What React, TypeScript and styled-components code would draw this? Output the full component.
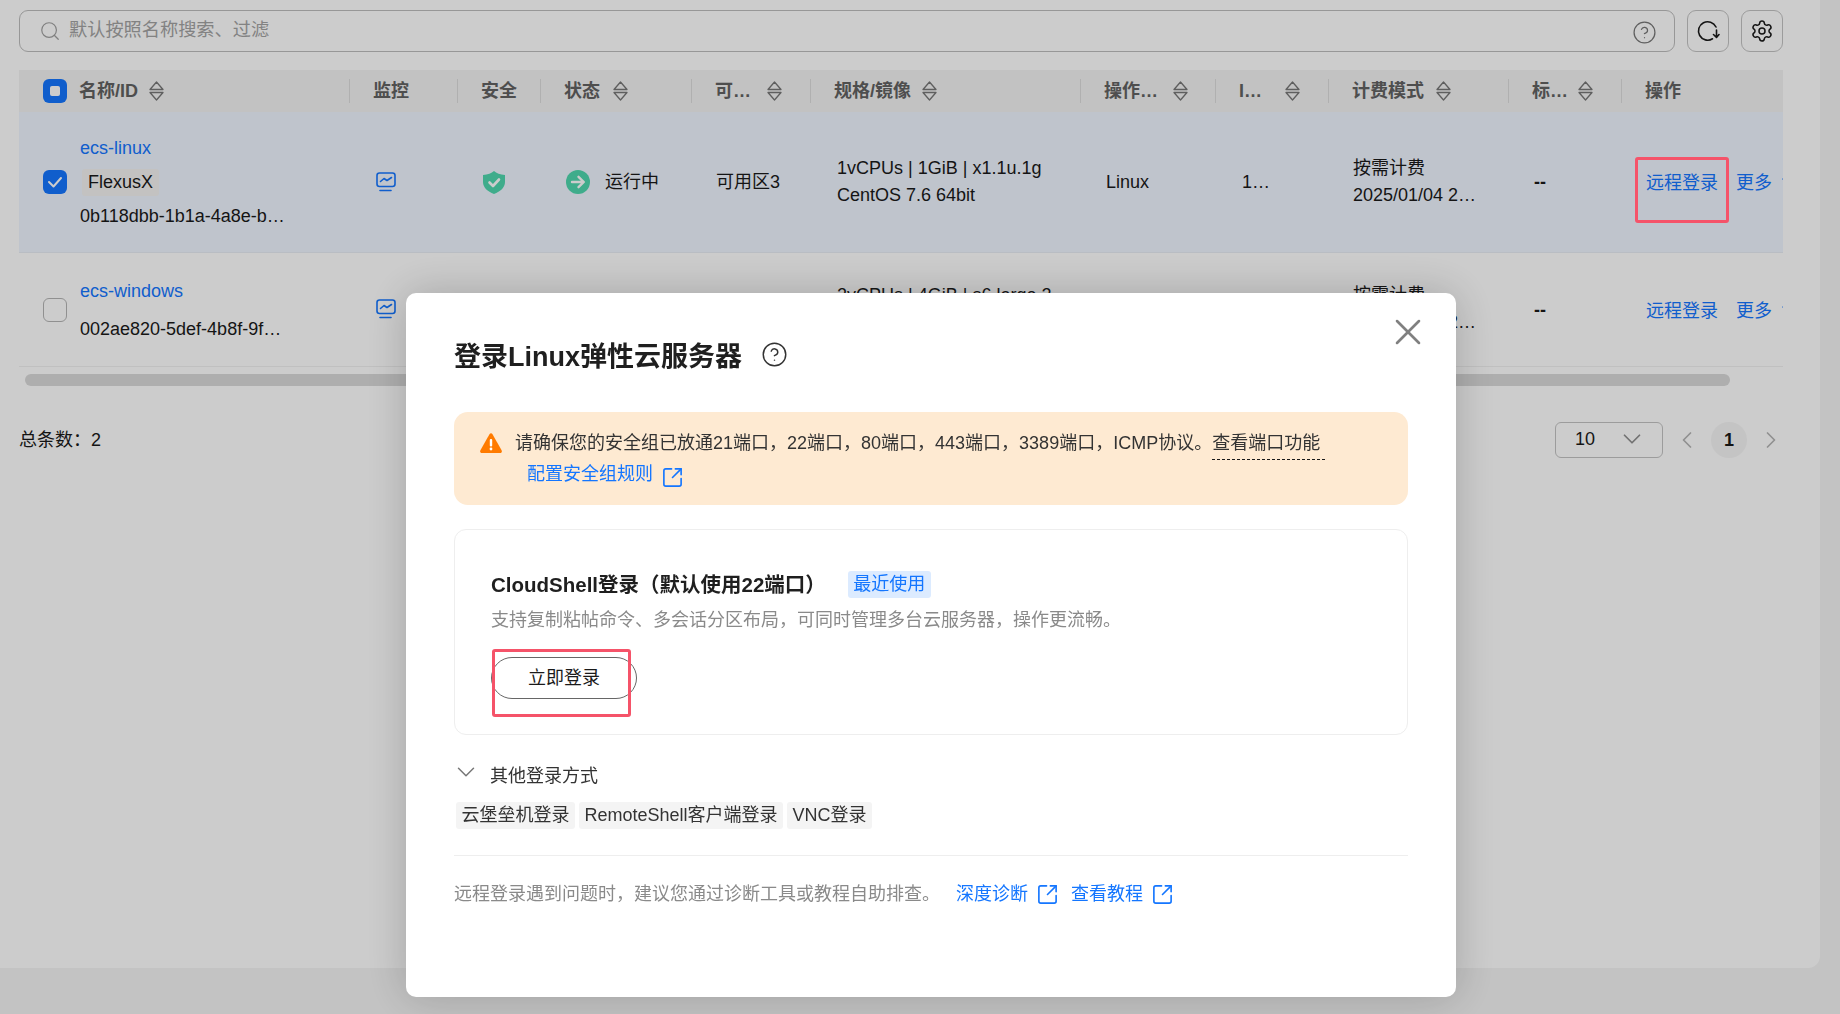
import React, { FunctionComponent } from 'react';
import styled, { createGlobalStyle } from 'styled-components';
import { ChevronDown, ChevronLeft, ChevronRight, CircleHelp, Search, Settings, SquareArrowOutUpRight, X } from 'lucide-react';

const PRIMARY = '#1476ff';
const COLUMNS = '330px 108px 83px 151px 119px 270px 135px 113px 180px 113px 162px';

const GlobalStyle = createGlobalStyle`
  html, body {
    margin: 0;
    padding: 0;
    height: 100%;
    overflow: hidden;
    background: #f4f4f4;
    font-family: "Liberation Sans", "Noto Sans CJK SC", sans-serif;
    font-size: 18px;
    color: #1a1a1a;
  }
  * {
    box-sizing: border-box;
  }
`;

const Panel = styled.main`
  width: 1820px;
  height: 968px;
  padding: 10px 37px 0 19px;
  background: #fff;
  border-radius: 0 0 12px 0;
`;

const Toolbar = styled.div`
  display: flex;
  gap: 12px;
  height: 42px;
`;

const SearchBox = styled.div`
  flex: 1;
  display: flex;
  align-items: center;
  padding: 0 17px 0 19px;
  border: 1px solid #bdbdbd;
  border-radius: 9px;
  color: #a3a3a3;
`;

const Placeholder = styled.span`
  flex: 1;
  margin-left: 8px;
  margin-top: -6px;
  font-size: 18.2px;
`;

const SearchHelp = styled(CircleHelp)`
  margin-top: 2px;
`;

const IconButton = styled.button`
  width: 42px;
  height: 42px;
  padding: 0;
  display: flex;
  align-items: center;
  justify-content: center;
  background: transparent;
  border: 1px solid #c4c4c4;
  border-radius: 9px;
  color: #1a1a1a;
`;

const HeaderRow = styled.div`
  display: grid;
  grid-template-columns: ${COLUMNS};
  align-items: center;
  height: 42px;
  margin-top: 18px;
  background: #f3f3f3;
`;

const HeadCell = styled.div<{ $first?: boolean }>`
  display: flex;
  align-items: center;
  height: 24px;
  padding-left: ${({ $first }) => ($first ? '24px' : '23px')};
  border-left: ${({ $first }) => ($first ? 'none' : '1px solid #dcdcdc')};
  font-weight: bold;
  line-height: 22px;
  color: #626262;
  white-space: nowrap;
`;

const SortIcon = styled.svg<{ $gap: number }>`
  flex: none;
  margin-left: ${({ $gap }) => $gap}px;
`;

const Check = styled.span<{ $on?: boolean }>`
  flex: none;
  width: 24px;
  height: 24px;
  display: flex;
  align-items: center;
  justify-content: center;
  border-radius: 6px;
  background: ${({ $on }) => ($on ? PRIMARY : '#fff')};
  border: ${({ $on }) => ($on ? 'none' : '1px solid #b5b5b5')};
`;

const CheckDot = styled.span`
  width: 10px;
  height: 10px;
  border-radius: 2px;
  background: #fff;
`;

const HeadName = styled.span`
  margin-left: 12px;
`;

const Row = styled.div<{ $selected?: boolean; $height: number }>`
  display: grid;
  grid-template-columns: ${COLUMNS};
  align-items: center;
  height: ${({ $height }) => $height}px;
  overflow: hidden;
  background: ${({ $selected }) => ($selected ? '#eff5ff' : '#fff')};
  border-bottom: 1px solid ${({ $selected }) => ($selected ? '#e8edf4' : '#f0f0f0')};
`;

const Cell = styled.div<{ $pad?: number }>`
  display: flex;
  flex-direction: column;
  gap: 5px;
  padding-left: ${({ $pad }) => $pad ?? 26}px;
  line-height: 22px;
  white-space: nowrap;
`;

const TwoLineCell = styled(Cell)`
  margin-top: -2px;
`;

const MonitorCell = styled(Cell)`
  margin-top: -1px;
`;

const NameCell = styled.div`
  display: flex;
  align-items: center;
  padding-left: 24px;
`;

const NameStack = styled.div<{ $gap: number }>`
  display: flex;
  flex-direction: column;
  align-items: flex-start;
  gap: ${({ $gap }) => $gap}px;
  margin-left: 13px;
  line-height: 26px;
`;

const Link = styled.a`
  color: ${PRIMARY};
  text-decoration: none;
`;

const Tag = styled.span`
  height: 27px;
  margin-left: 2px;
  padding: 0 6px;
  line-height: 27px;
  background: #f4f3f2;
  border-radius: 3px;
`;

const Status = styled.div`
  display: flex;
  align-items: center;
  gap: 15px;
  padding-left: 26px;
  line-height: 22px;
`;

const StatusText = styled.span`
  margin-top: -1px;
`;

const Dash = styled.span`
  margin-left: 1px;
  font-weight: bold;
`;

const OpsCell = styled.div`
  display: flex;
  align-items: center;
  margin-top: -2px;
  padding-left: 25px;
  white-space: nowrap;
`;

const Marked = styled.span`
  position: relative;
`;

/* red frames are drawn over the mask, they keep full colour in the picture */
const RedFrame = styled.span<{ $top: number; $right: number; $bottom: number; $left: number }>`
  position: absolute;
  z-index: 20;
  top: ${({ $top }) => $top}px;
  right: ${({ $right }) => $right}px;
  bottom: ${({ $bottom }) => $bottom}px;
  left: ${({ $left }) => $left}px;
  border: 3px solid #f55369;
  border-radius: 3px;
  pointer-events: none;
`;

const MoreLink = styled(Link)`
  display: flex;
  align-items: center;
  margin-left: 18px;
`;

const MoreChevron = styled(ChevronDown)`
  flex: none;
  margin-left: 7px;
`;

const ScrollBar = styled.div`
  height: 12px;
  margin: 7px 53px 0 6px;
  background: #dadada;
  border-radius: 6px;
`;

const Pager = styled.div`
  display: flex;
  align-items: center;
  gap: 6px;
  height: 36px;
  margin: 36px -6px 0 0;
`;

const Total = styled.span`
  flex: 1;
  padding-bottom: 4px;
`;

const PageSize = styled.div`
  width: 108px;
  height: 36px;
  display: flex;
  align-items: center;
  justify-content: space-between;
  padding: 0 15px 2px 19px;
  border: 1px solid #c4c4c4;
  border-radius: 6px;
`;

const PageNav = styled.span`
  width: 36px;
  height: 36px;
  display: flex;
  align-items: center;
  justify-content: center;
  color: #b5b5b5;
`;

const PageCurrent = styled(PageNav)`
  border-radius: 50%;
  background: #f6f6f6;
  font-weight: bold;
  color: #1a1a1a;
`;

const Mask = styled.div`
  position: fixed;
  inset: 0;
  z-index: 10;
  padding: 293px 0 0 406px;
  background: rgba(0, 0, 0, 0.2);
`;

const Modal = styled.section`
  position: relative;
  width: 1050px;
  height: 704px;
  padding: 44px 48px 0;
  background: #fff;
  border-radius: 10px;
  box-shadow: 0 0 44px rgba(0, 0, 0, 0.2);
`;

const CloseButton = styled.span`
  position: absolute;
  top: 17px;
  right: 26px;
  width: 44px;
  height: 44px;
  color: #808080;
`;

const TitleRow = styled.h2`
  display: flex;
  align-items: center;
  gap: 19px;
  height: 34px;
  margin: 0;
  font-size: 27px;
  font-weight: bold;
  color: #1f1f1f;
`;

const Alert = styled.div`
  display: flex;
  gap: 13px;
  height: 93px;
  margin-top: 41px;
  padding: 16px 0 0 26px;
  background: #feead2;
  border-radius: 14px;
  line-height: 31px;
  color: #333;
`;

const WarnIcon = styled.svg`
  flex: none;
  margin-top: 5px;
`;

const Dashed = styled.span`
  display: inline-block;
  height: 32px;
  padding-right: 5px;
  border-bottom: 1px dashed #1a1a1a;
`;

const IconLink = styled(Link)`
  display: flex;
  align-items: center;
  gap: 8px;
  margin-bottom: 5px;
`;

const ExternalMark = styled(SquareArrowOutUpRight)`
  flex: none;
  margin-top: 5px;
`;

const AlertLink = styled(IconLink)`
  margin-left: 12px;
  margin-top: -1px;
`;

const Card = styled.div`
  height: 206px;
  margin-top: 24px;
  padding: 41px 36px 0;
  border: 1px solid #eeeeee;
  border-radius: 12px;
`;

const CardHead = styled.div`
  display: flex;
  align-items: center;
  height: 27px;
`;

const CardTitle = styled.strong`
  margin-top: -4px;
  font-size: 20.5px;
  color: #1f1f1f;
`;

const RecentTag = styled.span`
  height: 27px;
  margin-left: 22px;
  padding: 0 5.5px;
  line-height: 27px;
  background: #dcebff;
  border-radius: 3px;
  color: ${PRIMARY};
`;

const Muted = styled.div`
  color: #8a8a8a;
  line-height: 26px;
`;

const CardDesc = styled(Muted)`
  margin-top: 9px;
`;

const LoginButton = styled.button`
  position: relative;
  display: block;
  width: 146px;
  height: 42px;
  margin-top: 24px;
  padding: 0 0 5px;
  background: #fff;
  border: 1px solid #666;
  border-radius: 21px;
  font: inherit;
  color: #1a1a1a;
`;

const OtherHead = styled.div`
  display: flex;
  align-items: center;
  gap: 9.5px;
  height: 26px;
  margin-top: 26px;
  color: #333;
`;

const OtherChevron = styled(ChevronDown)`
  flex: none;
  margin-top: -4px;
  margin-left: -3.5px;
`;

const MethodRow = styled.div`
  display: flex;
  gap: 4px;
  margin-top: 15px;
  margin-left: 2px;
`;

const Method = styled.span`
  height: 27px;
  padding: 0 5.5px;
  line-height: 27px;
  background: #f4f4f4;
  border-radius: 3px;
  color: #333;
`;

const Divider = styled.hr`
  height: 1px;
  margin: 26px 0 0;
  border: none;
  background: #eeeeee;
`;

const HelpRow = styled.div`
  display: flex;
  align-items: center;
  gap: 12px;
  height: 26px;
  margin-top: 25px;
`;

const HelpText = styled(Muted)`
  margin-right: 4px;
`;

interface SortProps {
  gap: number;
}

const Sort: FunctionComponent<SortProps> = ({ gap }) => (
  <SortIcon $gap={gap} width="15" height="20" viewBox="0 0 15 20" fill="none" stroke="#777" strokeWidth="1.3" strokeLinejoin="round">
    <path d="M7.5 1 L14 8.5 H1 Z" />
    <path d="M1 11.5 H14 L7.5 19 Z" />
  </SortIcon>
);

const MonitorIcon = () => (
  <svg width="20" height="20" viewBox="0 0 20 20" fill="none" stroke={PRIMARY} strokeWidth="1.6" strokeLinecap="round" strokeLinejoin="round">
    <rect x="1" y="1" width="18" height="13.5" rx="2.5" />
    <path d="M4.5 9.5 L8 6.5 L11 8.5 L15.5 5.5" />
    <path d="M4 18.5 H15" />
  </svg>
);

const ShieldIcon = () => (
  <svg width="22" height="23" viewBox="0 0 22 23">
    <path d="M11 0 C13.5 2.2 17 3.6 22 4 V11 C22 16.5 17.5 20.5 11 23 C4.5 20.5 0 16.5 0 11 V4 C5 3.6 8.5 2.2 11 0 Z" fill="#4fd8ae" />
    <path d="M6.5 11.5 L10 15 L16 8.5" fill="none" stroke="#fff" strokeWidth="2.6" strokeLinecap="round" strokeLinejoin="round" />
  </svg>
);

const RunningIcon = () => (
  <svg width="24" height="24" viewBox="0 0 24 24">
    <circle cx="12" cy="12" r="12" fill="#4fd8ae" />
    <path d="M6 12 H17 M12.5 6.8 L17.8 12 L12.5 17.2" fill="none" stroke="#fff" strokeWidth="2.4" strokeLinecap="round" strokeLinejoin="round" />
  </svg>
);

const RefreshIcon = () => (
  <svg width="24" height="22" viewBox="0 0 24 22" fill="none" stroke="#1a1a1a" strokeWidth="1.6" strokeLinecap="round" strokeLinejoin="round">
    <path d="M20 7 A9.2 9.2 0 1 0 16.5 18.8" />
    <path d="M20.5 10 V17 M17.5 14.5 L20.5 17.5 L23 14.5" />
  </svg>
);

const WarningIcon = () => (
  <WarnIcon width="22" height="20" viewBox="0 0 22 20">
    <path d="M9.6 1 C10.2 0 11.8 0 12.4 1 L21.7 17.4 C22.3 18.5 21.5 20 20.2 20 H1.8 C0.5 20 -0.3 18.5 0.3 17.4 Z" fill="#ff7b00" />
    <rect x="9.8" y="6" width="2.4" height="7.5" rx="1" fill="#fff" />
    <circle cx="11" cy="16" r="1.4" fill="#fff" />
  </WarnIcon>
);

const ExternalIcon = () => <ExternalMark size={23} strokeWidth={1.7} />;

const App = () => (
  <>
    <GlobalStyle />
    <Panel>
      <Toolbar>
        <SearchBox>
          <Search size={22} strokeWidth={1.3} color="#a0a0a0" />
          <Placeholder>默认按照名称搜索、过滤</Placeholder>
          <SearchHelp size={25} strokeWidth={1.2} color="#777" />
        </SearchBox>
        <IconButton>
          <RefreshIcon />
        </IconButton>
        <IconButton>
          <Settings size={24} strokeWidth={1.5} />
        </IconButton>
      </Toolbar>

      <HeaderRow>
        <HeadCell $first>
          <Check $on>
            <CheckDot />
          </Check>
          <HeadName>名称/ID</HeadName>
          <Sort gap={11} />
        </HeadCell>
        <HeadCell>监控</HeadCell>
        <HeadCell>安全</HeadCell>
        <HeadCell>
          状态
          <Sort gap={13} />
        </HeadCell>
        <HeadCell>
          可…
          <Sort gap={16} />
        </HeadCell>
        <HeadCell>
          规格/镜像
          <Sort gap={11} />
        </HeadCell>
        <HeadCell>
          操作…
          <Sort gap={15} />
        </HeadCell>
        <HeadCell>
          I…
          <Sort gap={23} />
        </HeadCell>
        <HeadCell>
          计费模式
          <Sort gap={12} />
        </HeadCell>
        <HeadCell>
          标…
          <Sort gap={10} />
        </HeadCell>
        <HeadCell>操作</HeadCell>
      </HeaderRow>

      <Row $selected $height={141}>
        <NameCell>
          <Check $on>
            <svg width="16" height="14" viewBox="0 0 16 14" fill="none" stroke="#fff" strokeWidth="2" strokeLinecap="round" strokeLinejoin="round">
              <path d="M2 7 L6.5 11.5 L14 3" />
            </svg>
          </Check>
          <NameStack $gap={7.5}>
            <Link>ecs-linux</Link>
            <Tag>FlexusX</Tag>
            <span>0b118dbb-1b1a-4a8e-b…</span>
          </NameStack>
        </NameCell>
        <MonitorCell $pad={27}>
          <MonitorIcon />
        </MonitorCell>
        <Cell>
          <ShieldIcon />
        </Cell>
        <Status>
          <RunningIcon />
          <StatusText>运行中</StatusText>
        </Status>
        <Cell $pad={25}>可用区3</Cell>
        <TwoLineCell $pad={27}>
          <span>1vCPUs | 1GiB | x1.1u.1g</span>
          <span>CentOS 7.6 64bit</span>
        </TwoLineCell>
        <Cell>Linux</Cell>
        <Cell $pad={27}>1…</Cell>
        <TwoLineCell $pad={25}>
          <span>按需计费</span>
          <span>2025/01/04 2…</span>
        </TwoLineCell>
        <Cell $pad={25}>
          <Dash>--</Dash>
        </Cell>
        <OpsCell>
          <Marked>
            <Link>远程登录</Link>
            <RedFrame $top={-11} $right={-11} $bottom={-29} $left={-11} />
          </Marked>
          <MoreLink>
            更多
            <MoreChevron size={16} />
          </MoreLink>
        </OpsCell>
      </Row>

      <Row $height={114}>
        <NameCell>
          <Check />
          <NameStack $gap={12}>
            <Link>ecs-windows</Link>
            <span>002ae820-5def-4b8f-9f…</span>
          </NameStack>
        </NameCell>
        <MonitorCell $pad={27}>
          <MonitorIcon />
        </MonitorCell>
        <Cell>
          <ShieldIcon />
        </Cell>
        <Status>
          <RunningIcon />
          <StatusText>运行中</StatusText>
        </Status>
        <Cell $pad={25}>可用区3</Cell>
        <TwoLineCell $pad={27}>
          <span>2vCPUs | 4GiB | s6.large.2</span>
          <span>Windows Server 2022</span>
        </TwoLineCell>
        <Cell>Windows</Cell>
        <Cell $pad={27}>1…</Cell>
        <TwoLineCell $pad={25}>
          <span>按需计费</span>
          <span>2025/01/04 2…</span>
        </TwoLineCell>
        <Cell $pad={25}>
          <Dash>--</Dash>
        </Cell>
        <OpsCell>
          <Link>远程登录</Link>
          <MoreLink>
            更多
            <MoreChevron size={16} />
          </MoreLink>
        </OpsCell>
      </Row>

      <ScrollBar />

      <Pager>
        <Total>总条数：2</Total>
        <PageSize>
          10
          <ChevronDown size={30} strokeWidth={1.4} color="#8f8f8f" />
        </PageSize>
        <PageNav>
          <ChevronLeft size={28} strokeWidth={1.5} />
        </PageNav>
        <PageCurrent>1</PageCurrent>
        <PageNav>
          <ChevronRight size={28} strokeWidth={1.5} />
        </PageNav>
      </Pager>
    </Panel>

    <Mask>
      <Modal>
        <CloseButton>
          <X size={44} strokeWidth={1.4} />
        </CloseButton>
        <TitleRow>
          登录Linux弹性云服务器
          <CircleHelp size={27} strokeWidth={1.3} color="#333" />
        </TitleRow>

        <Alert>
          <WarningIcon />
          <div>
            <div>
              请确保您的安全组已放通21端口，22端口，80端口，443端口，3389端口，ICMP协议。<Dashed>查看端口功能</Dashed>
            </div>
            <AlertLink>
              配置安全组规则
              <ExternalIcon />
            </AlertLink>
          </div>
        </Alert>

        <Card>
          <CardHead>
            <CardTitle>CloudShell登录（默认使用22端口）</CardTitle>
            <RecentTag>最近使用</RecentTag>
          </CardHead>
          <CardDesc>支持复制粘帖命令、多会话分区布局，可同时管理多台云服务器，操作更流畅。</CardDesc>
          <LoginButton>
            立即登录
            <RedFrame $top={-9} $right={5} $bottom={-19} $left={0} />
          </LoginButton>
        </Card>

        <OtherHead>
          <OtherChevron size={30} strokeWidth={1.2} color="#777" />
          其他登录方式
        </OtherHead>
        <MethodRow>
          <Method>云堡垒机登录</Method>
          <Method>RemoteShell客户端登录</Method>
          <Method>VNC登录</Method>
        </MethodRow>

        <Divider />

        <HelpRow>
          <HelpText>远程登录遇到问题时，建议您通过诊断工具或教程自助排查。</HelpText>
          <IconLink>
            深度诊断
            <ExternalIcon />
          </IconLink>
          <IconLink>
            查看教程
            <ExternalIcon />
          </IconLink>
        </HelpRow>
      </Modal>
    </Mask>
  </>
);

export default App;
